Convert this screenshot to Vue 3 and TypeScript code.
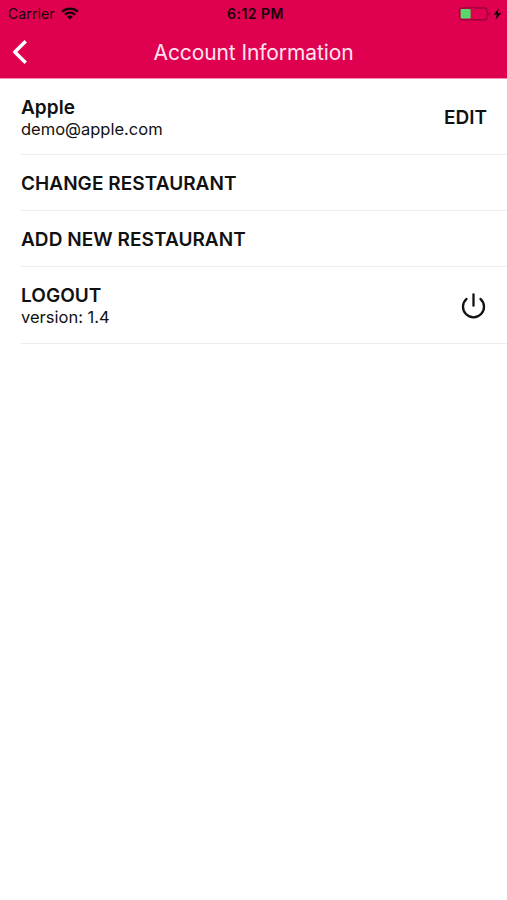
<script setup lang="ts">
interface Row {
  title: string
  subtitle?: string
  action?: 'edit' | 'power'
}

const rows: Row[] = [
  { title: 'Apple', subtitle: 'demo@apple.com', action: 'edit' },
  { title: 'CHANGE RESTAURANT' },
  { title: 'ADD NEW RESTAURANT' },
  { title: 'LOGOUT', subtitle: 'version: 1.4', action: 'power' },
]
</script>

<template>
  <div class="screen">
    <header class="header">
      <div class="status">
        <div class="carrier">
          <span>Carrier</span>
          <svg class="wifi" width="18" height="13" viewBox="0 0 17 13" preserveAspectRatio="none">
            <g fill="none" stroke="#160009" stroke-width="2.2">
              <path d="M1 4.7a10.7 10.7 0 0 1 15 0" />
              <path d="M3.7 7.7a6.8 6.8 0 0 1 9.6 0" />
            </g>
            <path d="M5.8 9.7a3.9 3.9 0 0 1 5.4 0L8.5 12.5z" fill="#160009" />
          </svg>
        </div>
        <span class="time">6:12 PM</span>
        <div class="power-state">
          <svg width="44" height="14" viewBox="0 0 44 14">
            <rect x="0.6" y="0.9" width="27.6" height="12" rx="3" fill="none" stroke="#96003a" stroke-width="1.2" />
            <rect x="1.6" y="2" width="10" height="9.6" rx="1.2" fill="#56d86b" />
            <path d="M29.6 5v4q1.5-.6 1.5-2t-1.5-2z" fill="#96003a" />
            <path d="M39.8 1.2 34.6 7.8h3.2l-1.4 5.2 5.9-7.1h-3.5z" fill="#160009" />
          </svg>
        </div>
      </div>
      <nav class="nav">
        <button class="back" type="button" aria-label="Back">
          <svg width="16" height="26" viewBox="0 0 16 26">
            <path d="M13.7 2.2 2.8 13l10.9 10.8" fill="none" stroke="#fff" stroke-width="3.5" stroke-linejoin="round" />
          </svg>
        </button>
        <h1 class="title">Account Information</h1>
        <span />
      </nav>
    </header>
    <main class="list">
      <section v-for="row in rows" :key="row.title" class="row" :class="{ tall: row.subtitle }">
        <div class="labels">
          <div class="label">{{ row.title }}</div>
          <div v-if="row.subtitle" class="subtitle">{{ row.subtitle }}</div>
        </div>
        <span v-if="row.action === 'edit'" class="edit-label">EDIT</span>
        <svg v-else-if="row.action === 'power'" class="power" width="26" height="28" viewBox="0 0 26 28">
          <g fill="none" stroke="#111" stroke-width="2.3" stroke-linecap="round">
            <path d="M5.6 6.9a10.5 10.5 0 1 0 13.8 0" />
            <path d="M12.5 2.5v11.2" />
          </g>
        </svg>
      </section>
    </main>
  </div>
</template>

<style>
body {
  background: #fff;
}
</style>

<style scoped>
.screen {
  min-height: 900px;
  background: #fff;
  color: #111;
  font-family: Inter, "Liberation Sans", sans-serif;
}
.header {
  box-sizing: border-box;
  height: 79px;
  background: #df0050;
  border-bottom: 1px solid #f08cb0;
}
.status {
  display: grid;
  grid-template-columns: 1fr auto 1fr;
  align-items: center;
  height: 27px;
  padding: 0 4px 0 8px;
  color: #160009;
  font-size: 14px;
}
.carrier {
  display: flex;
  align-items: center;
  gap: 6px;
  letter-spacing: 0.1px;
}
.time {
  font-size: 14px;
  font-weight: 600;
  letter-spacing: 0.5px;
}
.power-state {
  display: flex;
  justify-content: flex-end;
}
.nav {
  display: grid;
  grid-template-columns: 1fr auto 1fr;
  align-items: center;
  height: 50px;
}
.back {
  display: flex;
  margin: 0;
  padding: 0 0 0 12px;
  border: 0;
  background: none;
}
.title {
  margin: 0;
  color: #ffe3ee;
  font-size: 21px;
  font-weight: 400;
  letter-spacing: -0.1px;
}
.list {
  padding-left: 21px;
}
.row {
  box-sizing: border-box;
  display: flex;
  align-items: center;
  justify-content: space-between;
  height: 56px;
  padding: 2px 20px 0 0;
  border-bottom: 1px solid #ededed;
}
.row.tall {
  height: 77px;
  padding-top: 1px;
}
.row.tall:first-child {
  height: 76px;
  padding-top: 2px;
}
.label {
  font-size: 19px;
  font-weight: 600;
  line-height: 24px;
  letter-spacing: 0.05px;
}
.subtitle {
  font-size: 16.5px;
  line-height: 20px;
}
.row.tall .labels {
  display: grid;
  grid-template-rows: 23px 20px;
}
.row.tall:last-child .labels {
  padding-bottom: 1px;
}
.edit-label {
  font-size: 19px;
  font-weight: 600;
}
</style>
